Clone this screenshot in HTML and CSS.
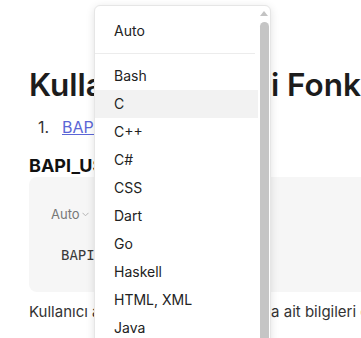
FILE: index.html
```html
<!DOCTYPE html>
<html lang="tr">
<head>
    <meta charset="UTF-8">
    <meta name="viewport" content="width=device-width, initial-scale=1.0">
    <title>Kullanıcı Bilgileri Fonksiyonları</title>
    <link rel="stylesheet" href="styles.css">
</head>
<body>
    <main class="doc">
        <h1>Kullanıcı Bilgileri Fonksiyonları</h1>
        <ol class="toc">
            <li><a href="#bapi-user-get-detail">BAPI_USER_GET_DETAIL</a></li>
        </ol>
        <h3 id="bapi-user-get-detail">BAPI_USER_GET_DETAIL</h3>
        <div class="code-block">
            <div class="code-toolbar">
                <span class="lang-toggle">Auto
                    <svg width="7" height="5" viewBox="0 0 7 5"><path d="M0.5 0.8 L3.5 3.8 L6.5 0.8" fill="none" stroke="#b5b5b5" stroke-width="1"/></svg>
                </span>
            </div>
            <pre><code>BAPI_USER_GET_DETAIL</code></pre>
        </div>
        <p>Kullanıcı adı belirtilen bir kullanıcıya ait bilgileri getirir.</p>
    </main>

    <!-- dil seçim menüsü (açık) -->
    <div class="lang-menu">
        <div class="lang-auto">Auto</div>
        <ul class="lang-list">
            <li>Bash</li>
            <li class="active">C</li>
            <li>C++</li>
            <li>C#</li>
            <li>CSS</li>
            <li>Dart</li>
            <li>Go</li>
            <li>Haskell</li>
            <li>HTML, XML</li>
            <li>Java</li>
            <li>JavaScript</li>
            <li>JSON</li>
        </ul>
        <div class="menu-scroll">
            <span class="scroll-arrow"></span>
            <span class="scroll-thumb"></span>
        </div>
    </div>
</body>
</html>
```

FILE: styles.css
```css
html {
    overflow: hidden;
}
body {
    font-family: Inter, "Noto Sans", sans-serif;
    background-color: #fff;
    color: #222;
    margin: 0;
    height: 338px;
    overflow: hidden;
    position: relative;
}
.doc {
    width: 700px;
    padding: 66px 0 0 29px;
}
.doc h1 {
    font-size: 31.5px;
    font-weight: 600;
    line-height: 37px;
    margin: 0;
    color: #1c1c1c;
    white-space: nowrap;
}
.toc {
    list-style: none;
    margin: 12px 0 0;
    padding-left: 9px;
    font-size: 16px;
    line-height: 24px;
    color: #333;
}
.toc li::before {
    content: "1.";
    display: inline-block;
    width: 24px;
}
.toc a {
    color: #5b66d6;
}
.doc h3 {
    font-size: 18px;
    font-weight: 700;
    line-height: 22px;
    margin: 16px 0 0;
    color: #111;
}
.code-block {
    margin-top: 0;
    height: 115px;
    background-color: #f6f6f6;
    border-radius: 8px;
    box-sizing: border-box;
}
.code-toolbar {
    padding: 26px 0 0 22px;
    height: 20px;
    line-height: 20px;
}
.lang-toggle {
    font-size: 13px;
    color: #777;
    display: inline-flex;
    align-items: center;
    gap: 2px;
}
.code-block pre {
    margin: 22px 0 0;
    padding-left: 32px;
    font-family: "DejaVu Sans Mono", "Liberation Mono", monospace;
    font-size: 14px;
    line-height: 20px;
    color: #3a3a3a;
}
.doc p {
    margin: 8px 0 0;
    font-size: 15px;
    line-height: 24px;
    color: #333;
    white-space: nowrap;
}

.lang-menu {
    position: absolute;
    top: 5px;
    left: 94px;
    width: 177px;
    height: 345px;
    background-color: #fff;
    border: 1px solid #e6e6e6;
    border-radius: 6px;
    box-shadow: 0 2px 8px rgba(0, 0, 0, 0.12);
    box-sizing: border-box;
    overflow: hidden;
    font-size: 14px;
    color: #222;
}
.lang-auto {
    padding: 15px 19px 12px;
    line-height: 20px;
    margin-right: 15px;
    border-bottom: 1px solid #ececec;
}
.lang-list {
    list-style: none;
    margin: 0;
    padding: 8px 0 0;
    width: 163px;
}
.lang-list li {
    height: 28px;
    line-height: 28px;
    padding-left: 19px;
}
.lang-list li.active {
    background-color: #f2f2f2;
}
.menu-scroll {
    position: absolute;
    top: 0;
    right: 1px;
    bottom: 0;
    width: 9px;
}
.scroll-arrow {
    position: absolute;
    top: 5px;
    left: 0;
    width: 0;
    height: 0;
    border-left: 4.5px solid transparent;
    border-right: 4.5px solid transparent;
    border-bottom: 5px solid #c3c3c3;
}
.scroll-thumb {
    position: absolute;
    top: 16px;
    left: 0;
    width: 9px;
    bottom: -10px;
    background-color: #c5c5c5;
    border-radius: 5px;
}
```
